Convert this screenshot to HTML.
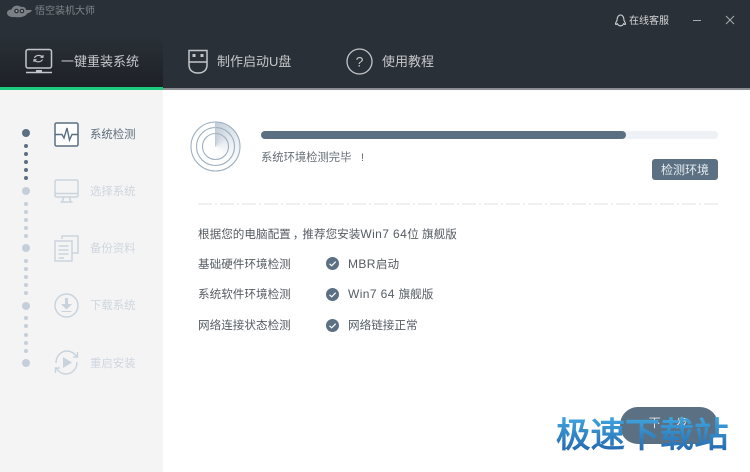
<!DOCTYPE html>
<html lang="zh">
<head>
<meta charset="utf-8">
<style>
html,body{margin:0;padding:0;background:#fff}
body{width:750px;height:472px;position:relative;overflow:hidden;font-family:"Liberation Sans","Noto Sans CJK SC",sans-serif;color:#5a6570}
.a{position:absolute;white-space:nowrap}
.t{filter:blur(.3px)}
.d{position:absolute;border-radius:50%}
.l{font-size:11.6px;line-height:15px;color:#555c64}
.n{font-size:12px;letter-spacing:.4px}
.s{font-size:11.4px;line-height:15px;color:#ced6df}
</style>
</head>
<body>
<div class="a" style="left:0;top:0;width:750px;height:88px;background:#2a3037"></div>
<div class="a" style="left:0;top:36px;width:163px;height:51px;background:linear-gradient(#2a3037,#1d2127)"></div>
<div class="a" style="left:0;top:87px;width:163px;height:3px;background:#1ccb7c"></div>
<div class="a" style="left:163px;top:88px;width:587px;height:2px;background:#8c8f93"></div>
<div class="a" style="left:0;top:90px;width:163px;height:382px;background:#f4f4f4"></div>

<svg class="a" style="left:6px;top:3px" width="30" height="17" viewBox="0 0 30 17">
<path d="M1 10C1 8 3 6.500 5.500 6.500C7 2.500 12 1.500 15 4C18 3.500 20 5 20 7H26C25 9 23 10 21 10.500C20 13.500 14 15 9 14C5 14.500 1 13 1 10Z" fill="#7b8086"/>
<circle cx="10.500" cy="8" r="2.300" fill="#2a3037"/><circle cx="16" cy="8" r="2.300" fill="#2a3037"/>
<circle cx="10.500" cy="8" r="1" fill="#a8acb0"/><circle cx="16" cy="8" r="1" fill="#a8acb0"/>
</svg>
<div class="a t" style="left:35px;top:5px;font-size:10px;line-height:14px;color:#80868c">悟空装机大师</div>

<svg class="a" style="left:24px;top:47px" width="32" height="28" viewBox="0 0 32 28" fill="none" stroke="#c3c6c9" stroke-width="1.500">
<rect x="2" y="2.500" width="25.500" height="18.500" rx="2"/>
<path d="M2 25.500H28" stroke-width="1.500"/><path d="M12 24H18" stroke-width="2"/>
<path d="M10.500 11C11.500 8 16.500 7.500 18.500 10M18.500 12.500C17 15.500 12 15.500 10.500 13M16.500 10.300H19V8M12.500 12.700H10V15" stroke-width="1.100"/>
</svg>
<div class="a t" style="left:61px;top:53px;font-size:13px;line-height:18px;color:#c5c8cb">一键重装系统</div>

<svg class="a" style="left:187px;top:48px" width="22" height="27" viewBox="0 0 22 27" fill="none" stroke="#c3c6c9" stroke-width="1.500">
<path d="M2 2.500H20V17C20 22.500 16 25 11 25C6 25 2 22.500 2 17Z"/><path d="M2 14H20"/>
<rect x="5.500" y="6" width="3" height="3" fill="#c3c6c9" stroke="none"/><rect x="13.500" y="6" width="3" height="3" fill="#c3c6c9" stroke="none"/>
</svg>
<div class="a t" style="left:217px;top:53px;font-size:13px;line-height:18px;color:#c5c8cb">制作启动U盘</div>

<svg class="a" style="left:346px;top:48px" width="27" height="27" viewBox="0 0 27 27" fill="none" stroke="#c3c6c9" stroke-width="1.300">
<circle cx="13.500" cy="13.500" r="12.500"/>
<text x="13.500" y="18.500" font-size="14" text-anchor="middle" fill="#c3c6c9" stroke="none" font-family="Liberation Sans">?</text>
</svg>
<div class="a t" style="left:382px;top:53px;font-size:13px;line-height:18px;color:#c5c8cb">使用教程</div>

<svg class="a" style="left:614px;top:14px" width="13" height="13" viewBox="0 0 13 13" fill="none" stroke="#d4d6d8" stroke-width="1.100">
<path d="M3 6.500C3 3 4.500 1 6.500 1C8.500 1 10 3 10 6.500C11 8 12 10 11 10.500L9.500 9.800C9 11 8 11.800 6.500 11.800C5 11.800 4 11 3.500 9.800L2 10.500C1 10 2 8 3 6.500Z"/>
</svg>
<div class="a t" style="left:629px;top:14px;font-size:10px;line-height:15px;color:#d4d6d8">在线客服</div>
<div class="a" style="left:693px;top:20px;width:8px;height:1px;background:#a9acaf"></div>
<svg class="a" style="left:725px;top:15px" width="10" height="10" viewBox="0 0 10 10" stroke="#a9acaf" stroke-width="1"><path d="M1 1L9 9M9 1L1 9"/></svg>

<div class="d" style="left:22px;top:129px;width:8px;height:8px;background:#5b6f82"></div>
<div class="d" style="left:24px;top:144px;width:4px;height:4px;background:#5b6f82"></div>
<div class="d" style="left:24px;top:152px;width:4px;height:4px;background:#5b6f82"></div>
<div class="d" style="left:24px;top:160px;width:4px;height:4px;background:#5b6f82"></div>
<div class="d" style="left:24px;top:168px;width:4px;height:4px;background:#5b6f82"></div>
<div class="d" style="left:24px;top:176px;width:4px;height:4px;background:#5b6f82"></div>
<div class="d" style="left:22px;top:187px;width:8px;height:8px;background:#c5cfdb"></div>
<div class="d" style="left:24px;top:202px;width:4px;height:4px;background:#c5cfdb"></div>
<div class="d" style="left:24px;top:210px;width:4px;height:4px;background:#c5cfdb"></div>
<div class="d" style="left:24px;top:218px;width:4px;height:4px;background:#c5cfdb"></div>
<div class="d" style="left:24px;top:226px;width:4px;height:4px;background:#c5cfdb"></div>
<div class="d" style="left:24px;top:234px;width:4px;height:4px;background:#c5cfdb"></div>
<div class="d" style="left:22px;top:244px;width:8px;height:8px;background:#c5cfdb"></div>
<div class="d" style="left:24px;top:259px;width:4px;height:4px;background:#c5cfdb"></div>
<div class="d" style="left:24px;top:267px;width:4px;height:4px;background:#c5cfdb"></div>
<div class="d" style="left:24px;top:275px;width:4px;height:4px;background:#c5cfdb"></div>
<div class="d" style="left:24px;top:283px;width:4px;height:4px;background:#c5cfdb"></div>
<div class="d" style="left:24px;top:291px;width:4px;height:4px;background:#c5cfdb"></div>
<div class="d" style="left:22px;top:302px;width:8px;height:8px;background:#c5cfdb"></div>
<div class="d" style="left:24px;top:316px;width:4px;height:4px;background:#c5cfdb"></div>
<div class="d" style="left:24px;top:324px;width:4px;height:4px;background:#c5cfdb"></div>
<div class="d" style="left:24px;top:333px;width:4px;height:4px;background:#c5cfdb"></div>
<div class="d" style="left:24px;top:341px;width:4px;height:4px;background:#c5cfdb"></div>
<div class="d" style="left:24px;top:349px;width:4px;height:4px;background:#c5cfdb"></div>
<div class="d" style="left:22px;top:359px;width:8px;height:8px;background:#c5cfdb"></div>

<svg class="a" style="left:54px;top:122px" width="25" height="25" viewBox="0 0 25 25" fill="#fdfdfd" stroke="#5b6f82" stroke-width="1.500">
<rect x="1" y="1" width="23" height="23" rx="1.500"/>
<path d="M1 12.500H8L10 16L13 6L15.500 18L18 12.500H24" fill="none" stroke-width="1.400"/>
</svg>
<div class="a t s" style="left:90px;top:128px;color:#5e6d7c">系统检测</div>

<svg class="a" style="left:54px;top:179px" width="25" height="25" viewBox="0 0 25 25" fill="none" stroke="#c9d3de" stroke-width="1.500">
<rect x="1" y="1" width="23" height="17" rx="1.500"/>
<path d="M1 14.500H24"/><path d="M9.500 18L8.500 22.500M15.500 18L16.500 22.500M6.500 23H18.500"/>
</svg>
<div class="a t s" style="left:90px;top:185px">选择系统</div>

<svg class="a" style="left:54px;top:235px" width="25" height="27" viewBox="0 0 25 27" fill="none" stroke="#c9d3de" stroke-width="1.400">
<path d="M8 4V1H24V18H18"/>
<rect x="1" y="6" width="17" height="20" fill="#f4f4f4"/>
<path d="M4.500 11H14.500M4.500 15H14.500M4.500 19H14.500M4.500 23H10"/>
</svg>
<div class="a t s" style="left:90px;top:242px">备份资料</div>

<svg class="a" style="left:54px;top:293px" width="25" height="25" viewBox="0 0 25 25" fill="none" stroke="#c9d3de" stroke-width="1.500">
<circle cx="12.500" cy="12.500" r="11.500"/>
<path d="M11 5H14V11H18L12.500 16.500L7 11H11Z" fill="#c9d3de" stroke="none"/>
<path d="M7.500 18.500H17.500" stroke-width="1"/>
</svg>
<div class="a t s" style="left:90px;top:299px">下载系统</div>

<svg class="a" style="left:52px;top:349px" width="29" height="27" viewBox="0 0 29 27" fill="none" stroke="#c9d3de" stroke-width="1.400">
<path d="M4 14C4 7 9 2 15 2C20 2 23 5 25 8"/>
<path d="M21 8H25.500V3"/>
<path d="M25 13C25 20 20 25 14 25C9 25 6 22 4 19"/>
<path d="M8 19H3.500V24"/>
<path d="M11 8L20 13.500L11 19Z" fill="#c9d3de" stroke="none"/>
</svg>
<div class="a t s" style="left:90px;top:357px">重启安装</div>

<div class="a" style="left:191px;top:122px;width:49px;height:49px;border-radius:50%;background:conic-gradient(#c3cfda 0deg,#e9edf1 70deg,#fbfbfc 130deg,#fff 200deg,#fff 360deg)"></div>
<svg class="a" style="left:190px;top:121px" width="51" height="51" viewBox="0 0 51 51">
<g fill="none" stroke="#9eb0c0" stroke-width="1.100">
<circle cx="25.500" cy="25.500" r="24.500"/>
<circle cx="25.500" cy="25.500" r="19"/>
<circle cx="25.500" cy="25.500" r="13"/>
</g>
<path d="M25.500 1V25.500" stroke="#b6c3cf" stroke-width=".8"/>
</svg>

<div class="a" style="left:261px;top:131px;width:457px;height:8px;border-radius:4px;background:#eef1f5"></div>
<div class="a" style="left:261px;top:131px;width:365px;height:8px;border-radius:4px;background:#5b7183"></div>
<div class="a t" style="left:261px;top:151px;font-size:11.300px;line-height:15px;color:#666e76">系统环境检测完毕</div>
<div class="a t" style="left:361px;top:151px;font-size:11px;line-height:15px;color:#666e76">!</div>
<div class="a t" style="left:652px;top:159px;width:66px;height:21px;border-radius:3px;background:#5b7183;color:#e6eaee;font-size:12px;line-height:22px;text-align:center">检测环境</div>

<svg class="a" style="left:198px;top:203px" width="520" height="2" viewBox="0 0 520 2"><path d="M0 1H520" stroke="#e0e2e4" stroke-width="1" stroke-dasharray="14 3 2 3"/></svg>

<div class="a t l" style="left:198px;top:227px">根据您的电脑配置<span style="position:relative;left:2px">，</span>推荐您安装<span class="n">Win7 64</span>位 旗舰版</div>

<div class="a t l" style="left:198px;top:257px">基础硬件环境检测</div>
<div class="a t l" style="left:198px;top:287px">系统软件环境检测</div>
<div class="a t l" style="left:198px;top:318px">网络连接状态检测</div>

<svg class="a" style="left:326px;top:257px" width="13" height="13" viewBox="0 0 13 13"><circle cx="6.500" cy="6.500" r="6.500" fill="#5b7183"/><path d="M3.500 6.800L5.700 8.800L9.700 4.700" fill="none" stroke="#fff" stroke-width="1.200"/></svg>
<svg class="a" style="left:326px;top:288px" width="13" height="13" viewBox="0 0 13 13"><circle cx="6.500" cy="6.500" r="6.500" fill="#5b7183"/><path d="M3.500 6.800L5.700 8.800L9.700 4.700" fill="none" stroke="#fff" stroke-width="1.200"/></svg>
<svg class="a" style="left:326px;top:319px" width="13" height="13" viewBox="0 0 13 13"><circle cx="6.500" cy="6.500" r="6.500" fill="#5b7183"/><path d="M3.500 6.800L5.700 8.800L9.700 4.700" fill="none" stroke="#fff" stroke-width="1.200"/></svg>

<div class="a t l" style="left:348px;top:257px"><span class="n">MBR</span>启动</div>
<div class="a t l" style="left:348px;top:287px"><span class="n">Win7 64 </span>旗舰版</div>
<div class="a t l" style="left:348px;top:318px">网络链接正常</div>

<div class="a t" style="left:620px;top:407px;width:98px;height:37px;border-radius:18px;background:#5b7183;color:#e6eaee;font-size:12px;line-height:32px;text-align:center;letter-spacing:1.500px">下一步</div>

<svg class="a" style="left:550px;top:410px" width="190" height="55" viewBox="0 0 190 55">
<defs><linearGradient id="w" x1="0" y1="0" x2="0" y2="1"><stop offset="0" stop-color="#46b6ec"/><stop offset="1" stop-color="#2360a8"/></linearGradient></defs>
<text x="6" y="37" font-size="34.500" fill="url(#w)" stroke="url(#w)" stroke-width="1" font-family="Noto Sans CJK SC, sans-serif">极速下载站</text>
</svg>
</body>
</html>
